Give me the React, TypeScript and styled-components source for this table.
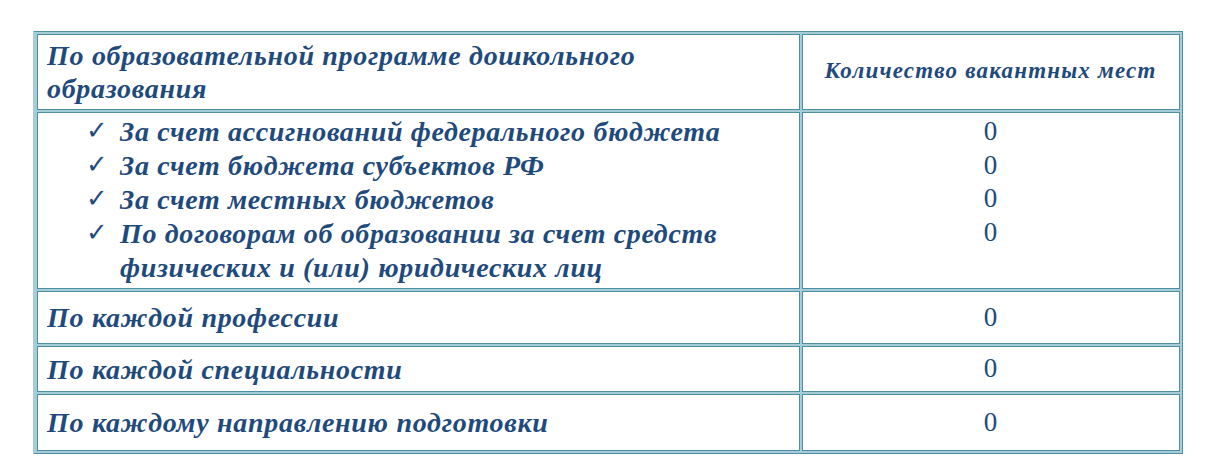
import React from "react";
import styled, { createGlobalStyle } from "styled-components";

const GlobalStyle = createGlobalStyle`
  html, body {
    margin: 0;
    padding: 0;
    background: #ffffff;
  }
`;

const Page = styled.div`
  padding: 31px 0 0 33px;
  font-family: "Liberation Serif", "Times New Roman", serif;
  color: #1f4a7c;
`;

const Table = styled.table`
  width: 1150px;
  border-collapse: separate;
  border-spacing: 2px;
  background: #a6ccd7;
  border-top: 1px solid #4d8ea2;
  border-right: 1px solid #4d8ea2;
  border-bottom: 1px solid #4d8ea2;
  border-left: 2px solid #a6ccd7;
`;

const Cell = styled.td<{ $h: number; $center?: boolean; $top?: boolean }>`
  background: #ffffff;
  border: 1px solid #4d8ea2;
  height: ${(p) => p.$h}px;
  box-sizing: border-box;
  padding: ${(p) => (p.$top ? "2px 10px 0 9px" : "0 10px 0 9px")};
  vertical-align: ${(p) => (p.$top ? "top" : "middle")};
  text-align: ${(p) => (p.$center ? "center" : "left")};
`;

const Label = styled.div`
  font-weight: bold;
  font-style: italic;
  font-size: 28px;
  line-height: 33px;
  letter-spacing: 0.7px;
`;

const HeadNote = styled.div`
  font-weight: bold;
  font-style: italic;
  font-size: 23px;
  line-height: 26px;
  letter-spacing: 1.2px;
  padding-bottom: 2px;
`;

const List = styled.ul`
  list-style: none;
  margin: 0;
  padding: 0 0 0 39px;
`;

const Item = styled.li`
  display: flex;
  font-weight: bold;
  font-style: italic;
  font-size: 28px;
  line-height: 34px;
  letter-spacing: 0.65px;
`;

const Tick = styled.span`
  flex: 0 0 34px;
  font-style: normal;
  font-weight: bold;
  font-family: "DejaVu Sans", sans-serif;
  font-size: 26px;
  line-height: 30px;
`;

const ItemText = styled.span`
  max-width: 620px;
`;

const Num = styled.div`
  font-size: 27px;
  line-height: 33.5px;
`;

const items = [
  "За счет ассигнований федерального бюджета",
  "За счет бюджета субъектов РФ",
  "За счет местных бюджетов",
  "По договорам об образовании за счет средств физических и (или) юридических лиц",
];

const rows = [
  { label: "По каждой профессии", h: 53 },
  { label: "По каждой специальности", h: 46 },
  { label: "По каждому направлению подготовки", h: 57 },
];

export default function App() {
  return (
    <Page>
      <GlobalStyle />
      <Table>
        <colgroup>
          <col style={{ width: 763 }} />
          <col />
        </colgroup>
        <tbody>
          <tr>
            <Cell $h={76}>
              <Label>
                По образовательной программе дошкольного
                <br />
                образования
              </Label>
            </Cell>
            <Cell $h={76} $center>
              <HeadNote>Количество вакантных мест</HeadNote>
            </Cell>
          </tr>
          <tr>
            <Cell $h={177} $top>
              <List>
                {items.map((t) => (
                  <Item key={t}>
                    <Tick>✓</Tick>
                    <ItemText>{t}</ItemText>
                  </Item>
                ))}
              </List>
            </Cell>
            <Cell $h={177} $center $top>
              {items.map((t) => (
                <Num key={t}>0</Num>
              ))}
            </Cell>
          </tr>
          {rows.map((r) => (
            <tr key={r.label}>
              <Cell $h={r.h}>
                <Label>{r.label}</Label>
              </Cell>
              <Cell $h={r.h} $center>
                <Num>0</Num>
              </Cell>
            </tr>
          ))}
        </tbody>
      </Table>
    </Page>
  );
}
